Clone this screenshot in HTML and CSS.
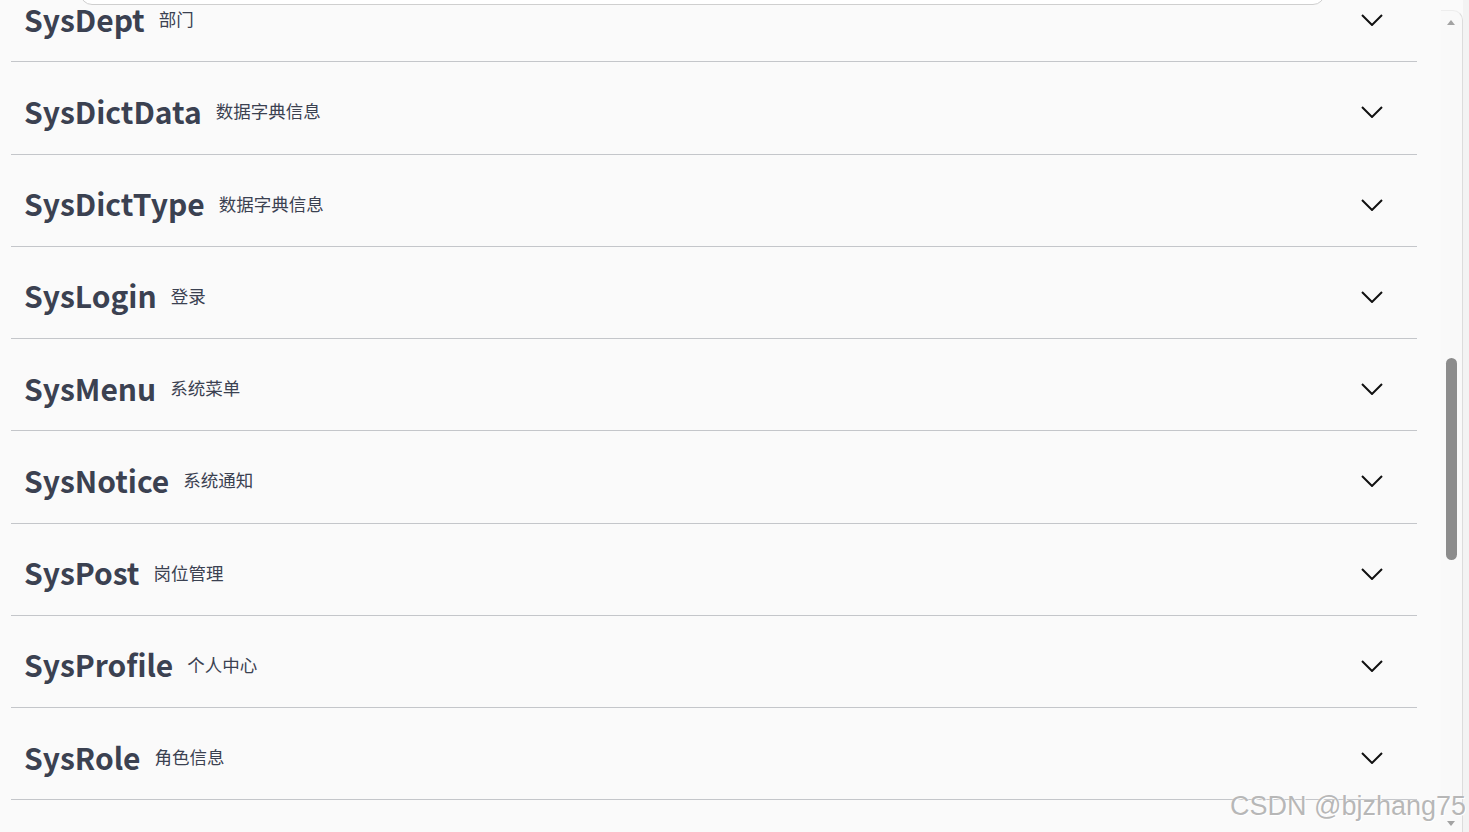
FILE: index.html
```html
<!DOCTYPE html>
<html lang="zh">
<head>
<meta charset="utf-8">
<title>Swagger UI</title>
<link rel="stylesheet" href="styles.css">
</head>
<body>
<div class="page">
  <div class="main">
    <div class="topbox"></div>
    <div class="list">
      <div class="tag"><span class="name">SysDept</span><small class="desc">部门</small><svg class="chev" width="22" height="12" viewBox="0 0 22 12"><path d="M1 1 L11 11 L21 1" fill="none" stroke="#111" stroke-width="2"/></svg></div>
      <div class="tag"><span class="name">SysDictData</span><small class="desc">数据字典信息</small><svg class="chev" width="22" height="12" viewBox="0 0 22 12"><path d="M1 1 L11 11 L21 1" fill="none" stroke="#111" stroke-width="2"/></svg></div>
      <div class="tag"><span class="name">SysDictType</span><small class="desc">数据字典信息</small><svg class="chev" width="22" height="12" viewBox="0 0 22 12"><path d="M1 1 L11 11 L21 1" fill="none" stroke="#111" stroke-width="2"/></svg></div>
      <div class="tag"><span class="name">SysLogin</span><small class="desc">登录</small><svg class="chev" width="22" height="12" viewBox="0 0 22 12"><path d="M1 1 L11 11 L21 1" fill="none" stroke="#111" stroke-width="2"/></svg></div>
      <div class="tag"><span class="name">SysMenu</span><small class="desc">系统菜单</small><svg class="chev" width="22" height="12" viewBox="0 0 22 12"><path d="M1 1 L11 11 L21 1" fill="none" stroke="#111" stroke-width="2"/></svg></div>
      <div class="tag"><span class="name">SysNotice</span><small class="desc">系统通知</small><svg class="chev" width="22" height="12" viewBox="0 0 22 12"><path d="M1 1 L11 11 L21 1" fill="none" stroke="#111" stroke-width="2"/></svg></div>
      <div class="tag"><span class="name">SysPost</span><small class="desc">岗位管理</small><svg class="chev" width="22" height="12" viewBox="0 0 22 12"><path d="M1 1 L11 11 L21 1" fill="none" stroke="#111" stroke-width="2"/></svg></div>
      <div class="tag"><span class="name">SysProfile</span><small class="desc">个人中心</small><svg class="chev" width="22" height="12" viewBox="0 0 22 12"><path d="M1 1 L11 11 L21 1" fill="none" stroke="#111" stroke-width="2"/></svg></div>
      <div class="tag"><span class="name">SysRole</span><small class="desc">角色信息</small><svg class="chev" width="22" height="12" viewBox="0 0 22 12"><path d="M1 1 L11 11 L21 1" fill="none" stroke="#111" stroke-width="2"/></svg></div>
    </div>
  </div>
  <div class="sbar">
    <div class="arrow-up"></div>
    <div class="thumb"></div>
    <div class="spacer"></div>
    <div class="arrow-down"></div>
  </div>
  <div class="edge"></div>
  <div class="watermark">CSDN @bjzhang75</div>
</div>
</body>
</html>
```
FILE: styles.css
```css
html, body {
  margin: 0;
  padding: 0;
  height: 832px;
  overflow: hidden;
  background: #fafafa;
  font-family: "Noto Sans CJK SC", "Noto Sans", sans-serif;
  color: #3b4151;
}
.page {
  position: relative;
  display: flex;
  height: 832px;
}
.main {
  flex: 1;
  position: relative;
  overflow: hidden;
  background: #fafafa;
}
.topbox {
  position: absolute;
  top: -20px;
  left: 80px;
  width: 1243px;
  height: 23px;
  border: 1px solid #cfcfcf;
  border-radius: 12px;
  background: #fff;
}
.list {
  margin-top: -30px;
  margin-left: 11px;
  width: 1406px;
}
.tag {
  display: flex;
  align-items: center;
  box-sizing: border-box;
  height: 92.25px;
  padding: 6px 34px 0 13px;
  border-bottom: 1px solid #c4c6ca;
}
.name {
  font-size: 30px;
  font-weight: 700;
  line-height: 1.2;
  color: #3b4151;
}
.desc {
  font-size: 17.5px;
  font-weight: 400;
  line-height: 1.2;
  margin-left: 14px;
  margin-top: 0;
  color: #3b4151;
}
.chev {
  margin-left: auto;
  margin-top: 3px;
}
.watermark {
  position: absolute;
  right: 3px;
  bottom: 12px;
  font-family: "Liberation Sans", Arial, sans-serif;
  font-size: 27px;
  line-height: 1;
  color: rgba(160, 160, 160, 0.75);
  text-shadow: 0 0 1px #fff, 1px 1px 0 #fff;
  white-space: nowrap;
}
.sbar {
  width: 21px;
  margin-top: 10px;
  background: #f9f9f9;
  border-right: 1px solid #dcdcdc;
  border-top: 1px solid #ededed;
  border-top-right-radius: 10px;
  display: flex;
  flex-direction: column;
  align-items: flex-start;
}
.arrow-up {
  width: 0;
  height: 0;
  margin: 9px 0 0 6px;
  border-left: 4px solid transparent;
  border-right: 4px solid transparent;
  border-bottom: 5px solid #a3a3a3;
}
.thumb {
  width: 11px;
  height: 202px;
  margin: 333px 0 0 5px;
  border-radius: 6px;
  background: #8c8c8c;
}
.spacer {
  flex: 1;
}
.arrow-down {
  width: 0;
  height: 0;
  margin: 0 0 6px 6px;
  border-left: 4px solid transparent;
  border-right: 4px solid transparent;
  border-top: 5px solid #a3a3a3;
}
.edge {
  width: 6px;
  background: #f3f3f3;
}
```
